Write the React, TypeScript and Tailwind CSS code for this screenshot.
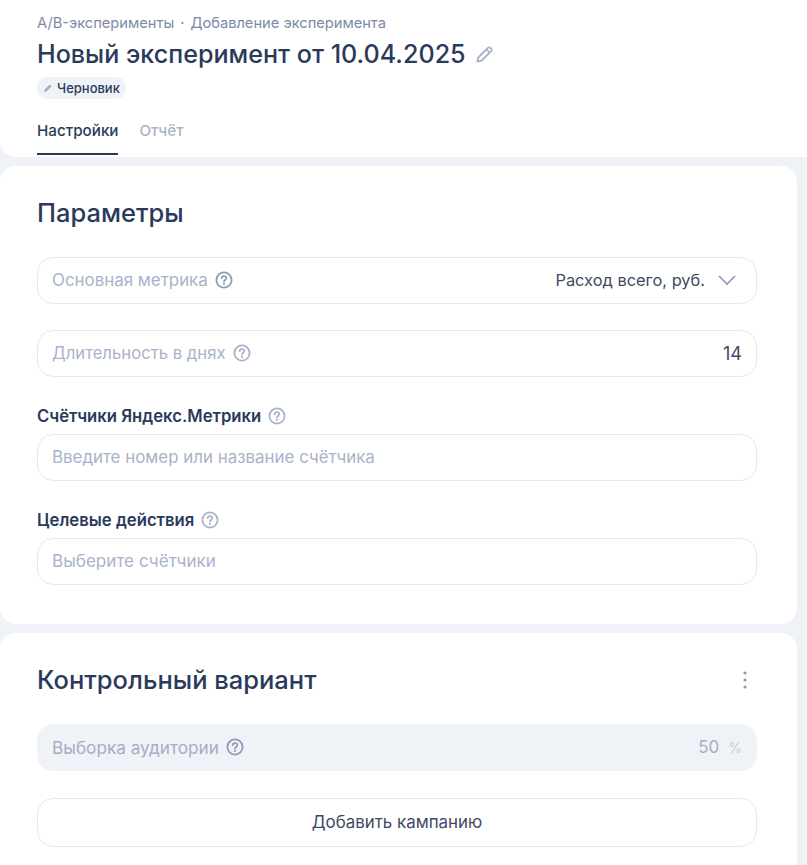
import React from "react";

const Help = ({ className = "" }: { className?: string }) => (
  <svg width="18" height="18" viewBox="0 0 18 18" fill="none" className={className}>
    <circle cx="9" cy="9" r="7.6" stroke="currentColor" strokeWidth="1.8" />
    <path d="M6.7 7.2C6.7 5.9 7.7 5.1 9 5.1c1.3 0 2.3.8 2.3 2 0 1.9-2.3 1.8-2.3 3.5" stroke="currentColor" strokeWidth="1.7" strokeLinecap="round" />
    <circle cx="9" cy="12.9" r="1.05" fill="currentColor" />
  </svg>
);

const Pencil = ({ size, className = "" }: { size: number; className?: string }) => (
  <svg width={size} height={size} viewBox="0 0 18 18" fill="none" className={className}>
    <path d="M2.2 15.8l.9-4L12.2 2.7a1.6 1.6 0 0 1 2.3 0l.8.8a1.6 1.6 0 0 1 0 2.3L6.2 14.9l-4 .9z" stroke="currentColor" strokeWidth="1.8" strokeLinejoin="round" />
    <path d="M10.8 4.2l3 3" stroke="currentColor" strokeWidth="1.6" />
  </svg>
);

const Field = ({ children, className = "" }: { children: React.ReactNode; className?: string }) => (
  <div className={`flex h-[47px] items-center justify-between rounded-2xl px-[14px] text-[16.9px] ${className}`}>{children}</div>
);

const Label = ({ text }: { text: string }) => (
  <div className="mb-[9px] flex h-[18px] items-center gap-[7px] text-[16.7px] font-semibold leading-[18px] text-[#2b3a5a]">
    {text}
    <Help className="text-[#a9b3c9]" />
  </div>
);

export default function App() {
  return (
    <div className="h-[865px] w-[807px] overflow-hidden bg-[#eff2f7] text-[#2b3a5a] [font-family:Inter,'Noto_Sans',sans-serif]">
      <header className="h-[157px] rounded-bl-2xl bg-white pl-[37px] pt-[14px]">
        <div className="flex h-[18px] items-center text-[14.65px] leading-[18px] text-[#7d8aa6]">
          <span>A/B-эксперименты</span>
          <span className="mx-[6px]">·</span>
          <span>Добавление эксперимента</span>
        </div>
        <div className="mt-[5px] flex h-[34px] items-center gap-[9px] text-[25.1px] font-medium leading-[34px]">
          <span>Новый эксперимент от 10.04.2025</span>
          <Pencil size={19} className="text-[#a9b3c9]" />
        </div>
        <div className="mt-[6px] flex h-[22px] w-[89px] items-center gap-[4px] rounded-[10px] bg-[#eff2f7] pl-[6px] text-[13px] font-medium leading-[22px]">
          <svg width="10" height="10" viewBox="0 0 10 10" className="text-[#a0aac0]">
            <path d="M1 9l.5-2.3L6.8 1.4l1.8 1.8L3.3 8.5 1 9z" fill="currentColor" />
          </svg>
          Черновик
        </div>
        <nav className="mt-[19px] flex gap-[21px] text-[15.2px] font-medium leading-[20px]">
          <div className="h-[37px] border-b-2 border-[#2b3a5a] pt-[3px]">Настройки</div>
          <div className="pt-[3px] text-[#a9b3c9]">Отчёт</div>
        </nav>
      </header>

      <section className="mt-[9px] h-[458px] w-[797px] rounded-2xl bg-white pl-[37px] pr-[40px] pt-[31px]">
        <h2 className="h-[34px] text-[25.5px] font-medium leading-[32px]">Параметры</h2>
        <Field className="mt-[26px] border border-[#e6e9f2]">
          <span className="flex items-center gap-[7px] text-[#a9b3c9]">Основная метрика <Help className="text-[#8f9bb5]" /></span>
          <span className="flex items-center gap-[12px] pr-[5px] text-[16.4px] text-[#3e4a63]">
            Расход всего, руб.
            <svg width="20" height="20" viewBox="0 0 20 20" fill="none" className="text-[#8f9bb5]"><path d="M2 6l8 8 8-8" stroke="currentColor" strokeWidth="1.7" /></svg>
          </span>
        </Field>
        <Field className="mt-[26px] border border-[#e6e9f2]">
          <span className="flex items-center gap-[7px] text-[16.7px] text-[#a9b3c9]">Длительность в днях <Help className="text-[#a9b3c9]" /></span>
          <span className="text-[18px] text-[#3e4a63]">14</span>
        </Field>
        <div className="mt-[30px]"><Label text="Счётчики Яндекс.Метрики" /></div>
        <Field className="border border-[#e6e9f2] text-[#a9b3c9]">Введите номер или название счётчика</Field>
        <div className="mt-[30px]"><Label text="Целевые действия" /></div>
        <Field className="border border-[#e6e9f2] pb-[1px] text-[17.1px] text-[#a9b3c9]">Выберите счётчики</Field>
      </section>

      <section className="mt-[9px] h-[300px] w-[797px] rounded-2xl bg-white pl-[37px] pr-[40px] pt-[30px]">
        <div className="flex h-[34px] items-center justify-between">
          <h2 className="text-[25.5px] font-medium leading-[34px]">Контрольный вариант</h2>
          <svg width="4" height="18" viewBox="0 0 4 18" className="mr-[10px] text-[#8f9bb5]">
            <circle cx="2" cy="2" r="1.6" fill="currentColor" /><circle cx="2" cy="9" r="1.6" fill="currentColor" /><circle cx="2" cy="16" r="1.6" fill="currentColor" />
          </svg>
        </div>
        <Field className="mt-[27px] bg-[#eff2f7] px-[15px]">
          <span className="flex items-center gap-[7px] text-[17.2px] text-[#a3aec5]">Выборка аудитории <Help className="text-[#8f9bb5]" /></span>
          <span className="flex items-center gap-[9px] text-[#a3aec5]">50 <span className="text-[14px] text-[#c7cedd]">%</span></span>
        </Field>
        <button className="mt-[27px] h-[49px] w-full rounded-2xl border border-[#e6e9f2] text-[16.9px] text-[#3e4a63]">Добавить кампанию</button>
      </section>
    </div>
  );
}
